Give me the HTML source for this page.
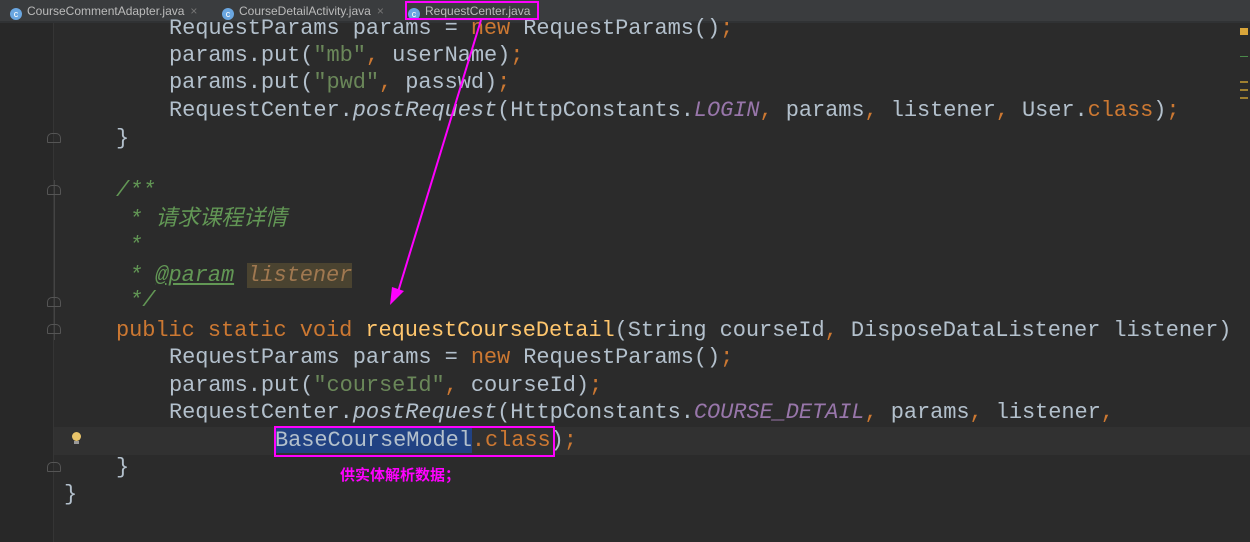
<!DOCTYPE html>
<html><head><meta charset="utf-8"><style>
body{margin:0;width:1250px;height:542px;background:#2b2b2b;overflow:hidden;position:relative;font-family:"Liberation Mono","Noto Sans CJK SC",monospace;}
.tabs{position:absolute;left:0;top:0;width:1250px;height:21px;background:#3a3c3e;border-bottom:2px solid #303234;font-family:"Liberation Sans",sans-serif;font-size:12px;color:#bbbbbb;}
.tab{position:absolute;top:1px;height:21px;line-height:21px;}
.ic{display:inline-block;width:12px;height:12px;border-radius:50%;background:#6aa6e0;color:#fff;font-size:9px;line-height:12px;text-align:center;vertical-align:-2px;margin-right:5px;}
.x{color:#777;margin-left:6px;}
.gut{position:absolute;left:0;top:23px;width:53px;height:519px;background:#282828;border-right:1px solid #353535;}
.fl{position:absolute;left:54px;top:180px;width:1px;height:160px;background:#444;}
.ln{position:absolute;left:0;white-space:pre;font-size:22px;letter-spacing:-0.08px;color:#b3c0cc;height:27px;line-height:27px;}
.k{color:#cc7832}.s{color:#6a8759}.i{font-style:italic}.c{color:#9876aa;font-style:italic}.d{color:#629755;font-style:italic}.m{color:#ffc66d}
.cur{position:absolute;left:54px;top:427px;width:1196px;height:28px;background:#313131;}
.fold{position:absolute;left:47px;width:14px;height:10px;border:1px solid #555;border-radius:5px 5px 1px 1px;box-sizing:border-box;}
</style></head><body>
<div class="tabs">
<div class="tab" style="left:10px"><span class="ic">c</span>CourseCommentAdapter.java<span class="x">×</span></div>
<div class="tab" style="left:222px"><span class="ic">c</span>CourseDetailActivity.java<span class="x">×</span></div>
<div class="tab" style="left:408px"><span class="ic">c</span>RequestCenter.java</div>
</div>
<div class="gut"></div>
<div class="fl"></div>
<div class="cur"></div>
<div class="fold" style="top:133px"></div>
<div class="fold" style="top:185px"></div>
<div class="fold" style="top:297px"></div>
<div class="fold" style="top:324px"></div>
<div class="fold" style="top:462px"></div>
<div style="position:absolute;left:72px;top:432px;width:9px;height:9px;border-radius:50%;background:#e8c46a"></div>
<div style="position:absolute;left:74px;top:441px;width:5px;height:3px;background:#999"></div>
<div style="position:absolute;left:1240px;top:28px;width:8px;height:7px;background:#d9a53a"></div>
<div style="position:absolute;left:1240px;top:56px;width:8px;height:1px;background:#4a8a4a"></div>
<div style="position:absolute;left:1240px;top:81px;width:8px;height:2px;background:#a08030"></div>
<div style="position:absolute;left:1240px;top:89px;width:8px;height:2px;background:#a08030"></div>
<div style="position:absolute;left:1240px;top:97px;width:8px;height:2px;background:#a08030"></div>

<div class="ln" style="top:15px;left:169px">RequestParams params = <span class="k">new</span> RequestParams()<span class="k">;</span></div>
<div class="ln" style="top:42px;left:169px">params.put(<span class="s">"mb"</span><span class="k">,</span> userName)<span class="k">;</span></div>
<div class="ln" style="top:69px;left:169px">params.put(<span class="s">"pwd"</span><span class="k">,</span> passwd)<span class="k">;</span></div>
<div class="ln" style="top:97px;left:169px">RequestCenter.<span class="i">postRequest</span>(HttpConstants.<span class="c">LOGIN</span><span class="k">,</span> params<span class="k">,</span> listener<span class="k">,</span> User.<span class="k">class</span>)<span class="k">;</span></div>
<div class="ln" style="top:125px;left:116px">}</div>
<div class="ln d" style="top:177px;left:116px">/**</div>
<div class="ln d" style="top:206px;left:116px"> * 请求课程详情</div>
<div class="ln d" style="top:232px;left:116px"> *</div>
<div class="ln d" style="top:262px;left:116px"> * <u>@param</u> <span style="background:#4a4330;color:#a07850">listener</span></div>
<div class="ln d" style="top:287px;left:116px"> */</div>
<div class="ln" style="top:317px;left:116px"><span class="k">public static void </span><span class="m">requestCourseDetail</span>(String courseId<span class="k">,</span> DisposeDataListener listener)</div>
<div class="ln" style="top:344px;left:169px">RequestParams params = <span class="k">new</span> RequestParams()<span class="k">;</span></div>
<div class="ln" style="top:372px;left:169px">params.put(<span class="s">"courseId"</span><span class="k">,</span> courseId)<span class="k">;</span></div>
<div class="ln" style="top:399px;left:169px">RequestCenter.<span class="i">postRequest</span>(HttpConstants.<span class="c">COURSE_DETAIL</span><span class="k">,</span> params<span class="k">,</span> listener<span class="k">,</span></div>
<div class="ln" style="top:427px;left:275px"><span style="background:#214283">BaseCourseModel</span><span class="k">.class</span>)<span class="k">;</span></div>
<div class="ln" style="top:454px;left:116px">}</div>
<div class="ln" style="top:481px;left:64px">}</div>

<div style="position:absolute;left:405px;top:1px;width:134px;height:19px;border:2px solid #ff00ff;box-sizing:border-box"></div>
<div style="position:absolute;left:274px;top:426px;width:281px;height:31px;border:2px solid #ff00ff;box-sizing:border-box"></div>
<div style="position:absolute;left:340px;top:464px;color:#ff00ff;font-size:15px;font-weight:bold;font-family:'Liberation Sans','Noto Sans CJK SC',sans-serif">供实体解析数据；</div>
<svg style="position:absolute;left:0;top:0" width="1250" height="542"><line x1="481" y1="20" x2="398" y2="292" stroke="#ff00ff" stroke-width="2"/><polygon points="390,305 392,287 404,291" fill="#ff00ff"/></svg>
</body></html>
